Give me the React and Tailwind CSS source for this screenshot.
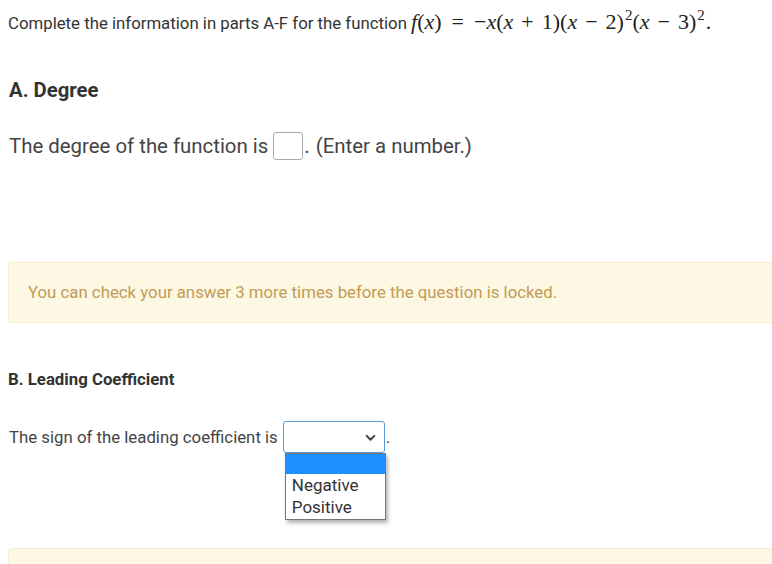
import React from "react";

function M({ children }) {
  return <span className="italic">{children}</span>;
}

function Sup({ children }) {
  return <span className="inline-block text-[15px] relative top-[-9px] ml-[1px]">{children}</span>;
}

export default function App() {
  return (
    <div className="w-[800px] bg-white pl-2 text-[#333] overflow-hidden" style={{ fontFamily: "Roboto, 'Liberation Sans', sans-serif" }}>
      <div className="h-[564px] overflow-hidden">
        <p className="pt-[10px] text-[16.8px] leading-[24px] text-[#333] flex items-baseline">
          <span>Complete the information in parts A-F for the function&nbsp;</span>
          <span className="text-[22px] text-[#222] whitespace-nowrap" style={{ fontFamily: "'Liberation Serif', 'DejaVu Serif', serif" }}>
            <M>f</M>(<M>x</M>)<span className="mx-[10px]">=</span>−<M>x</M>(<M>x</M><span className="mx-[8px]">+</span>1)(<M>x</M><span className="mx-[8px]">−</span>2)<Sup>2</Sup>(<M>x</M><span className="mx-[8px]">−</span>3)<Sup>2</Sup><span className="ml-[1px]">.</span>
          </span>
        </p>

        <h2 className="mt-[42px] text-[20.3px] leading-[24px] font-bold text-[#333] pl-[1px]">A. Degree</h2>

        <div className="mt-[29px] flex items-center text-[20.4px] leading-[30px] text-[#444] pl-[1px]">
          <span>The degree of the function is</span>
          <span className="ml-[5px] inline-block w-[30px] h-[28px] border border-[#aaa] rounded-[3px] bg-white"></span>
          <span className="ml-[1px]">.</span>
          <span className="ml-[6px]">(Enter a number.)</span>
        </div>

        <div className="mt-[101px] h-[61px] border border-[#faebcc] bg-[#fcf8e3] rounded-[4px] flex items-center pl-[19px] text-[16.8px] text-[#c49a55]">
          You can check your answer 3 more times before the question is locked.
        </div>

        <h3 className="mt-[45px] text-[16.8px] leading-[22px] font-bold text-[#333]">B. Leading Coefficient</h3>

        <div className="mt-[31px] flex items-center text-[16.8px] leading-[22px] text-[#444] pl-[1px] relative">
          <span>The sign of the leading coefficient is</span>
          <span className="ml-[5px] relative inline-flex items-center justify-end w-[102px] h-[32px] border border-[#5b9bd5] rounded-[3px] bg-white pr-[7px]">
            <svg width="13" height="13" viewBox="0 0 12 12" fill="none" stroke="#444" strokeWidth="1.9" strokeLinecap="round" strokeLinejoin="round">
              <path d="M2.5 4.5 L6 8 L9.5 4.5" />
            </svg>
            <div className="absolute left-[1px] top-[31px] w-[101px] bg-white border border-[#767676] shadow-[2px_3px_4px_rgba(0,0,0,0.3)] text-[17px] leading-[22px] text-[#333] z-10">
              <div className="h-[20px] bg-[#1e90ff]"></div>
              <div className="pl-[6px]">Negative</div>
              <div className="pl-[6px] pb-[1px]">Positive</div>
            </div>
          </span>
          <span className="ml-[1px]">.</span>
        </div>

        <div className="mt-[95px] h-[60px] border border-[#faebcc] bg-[#fcf8e3] rounded-[4px]"></div>
      </div>
    </div>
  );
}
